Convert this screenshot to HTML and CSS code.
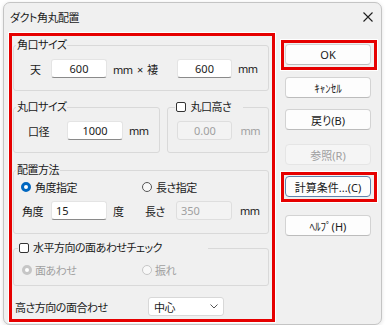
FILE: index.html
```html
<!DOCTYPE html>
<html lang="ja">

<head>
    <meta charset="UTF-8">
    <meta name="viewport" content="width=device-width, initial-scale=1.0">
    <title>ダクト角丸配置</title>
    <link rel="stylesheet" href="styles.css">
</head>

<body>
    <div class="window">
        <div class="titlebar">
            <span class="title">ダクト角丸配置</span>
            <span class="close">
                <svg width="10" height="10" viewBox="0 0 10 10">
                    <path d="M0.5 0.5L9.5 9.5M9.5 0.5L0.5 9.5" stroke="#1f1f1f" stroke-width="1.1" fill="none" />
                </svg>
            </span>
        </div>

        <div class="main">
            <!-- 左側 入力パネル -->
            <div class="panel">
                <fieldset class="group g-kaku">
                    <legend>角口サイズ</legend>
                    <div class="row p16">
                        <span class="lbl w21">天</span>
                        <input class="box w56" value="600">
                        <span class="unit w70 ws">mm × 褄</span>
                        <input class="box w55" value="600">
                        <span class="unit">mm</span>
                    </div>
                </fieldset>

                <div class="pair">
                    <fieldset class="group g-maru">
                        <legend>丸口サイズ</legend>
                        <div class="row p14">
                            <span class="lbl w39">口径</span>
                            <input class="box w56" value="1000">
                            <span class="unit">mm</span>
                        </div>
                    </fieldset>
                    <fieldset class="group g-height">
                        <legend class="check-legend"><span class="check"></span>丸口高さ</legend>
                        <div class="row p9">
                            <input class="box w55" value="0.00" disabled>
                            <span class="unit u8 off">mm</span>
                        </div>
                    </fieldset>
                </div>

                <fieldset class="group g-place">
                    <legend>配置方法</legend>
                    <div class="radios p7">
                        <span class="opt"><span class="radio on"></span>角度指定</span>
                        <span class="opt"><span class="radio"></span>長さ指定</span>
                    </div>
                    <div class="row p8 gap6">
                        <span class="lbl w29">角度</span>
                        <input class="box w56 left" value="15">
                        <span class="unit w38">度</span>
                        <span class="lbl w31">長さ</span>
                        <input class="box w56 left" value="350" disabled>
                        <span class="unit u8">mm</span>
                    </div>
                </fieldset>

                <fieldset class="group g-flush">
                    <legend class="check-legend"><span class="check"></span>水平方向の面あわせチェック</legend>
                    <div class="radios p8 off">
                        <span class="opt g3"><span class="radio on dis"></span>面あわせ</span>
                        <span class="opt g3"><span class="radio dis"></span>振れ</span>
                    </div>
                </fieldset>

                <div class="bottom-row">
                    <span class="lbl w133">高さ方向の面合わせ</span>
                    <div class="select">
                        <span>中心</span>
                        <svg width="8" height="5" viewBox="0 0 8 5">
                            <path d="M0.5 0.5L4 4L7.5 0.5" stroke="#555" stroke-width="1" fill="none" />
                        </svg>
                    </div>
                </div>
            </div>

            <!-- 右側 ボタン -->
            <div class="side">
                <div class="mark">
                    <button class="btn">OK</button>
                </div>
                <button class="btn m7">ｷｬﾝｾﾙ</button>
                <button class="btn m11">戻り(B)</button>
                <button class="btn m14" disabled>参照(R)</button>
                <div class="mark m7">
                    <button class="btn focus">計算条件...(C)</button>
                </div>
                <button class="btn m13">ﾍﾙﾌﾟ(H)</button>
            </div>
        </div>
    </div>
</body>

</html>
```

FILE: styles.css
```css
* {
    margin: 0;
    padding: 0;
    box-sizing: border-box;
}

body {
    background: #fff;
    font-family: "Noto Sans", "Noto Sans CJK JP", sans-serif;
    font-size: 11px;
    letter-spacing: -0.5px;
    color: #1a1a1a;
    font-feature-settings: "palt";
}

.window {
    width: 379px;
    height: 323px;
    margin: 2px 0 0 3px;
    background: #f0f0f0;
    border: 1px solid #c4c4c4;
    border-radius: 7px;
    box-shadow: 0 1px 4px rgba(0, 0, 0, .12);
}

.titlebar {
    height: 30px;
    display: flex;
    align-items: center;
    justify-content: space-between;
    padding: 0 8px 3px 6px;
}

.close {
    display: flex;
}

.main {
    display: flex;
    align-items: flex-start;
    padding-left: 5px;
}

/* 赤枠 */
.panel {
    width: 266px;
    height: 289px;
    border: 3px solid #e60000;
    padding: 1px 3px 0 1px;
    box-shadow: 0 0 0 1px #fff;
}

.mark {
    border: 3px solid #e60000;
    padding: 1px 3px 2px 1px;
    box-shadow: 0 0 0 1px #fff;
}

/* グループ枠 */
.group {
    border: 1px solid #d9d9d9;
    border-radius: 3px;
    min-width: 0;
}

.group legend {
    margin-left: 2px;
    padding: 0 1px;
    height: 16px;
    line-height: 16px;
}

.check-legend {
    display: flex;
    align-items: center;
}

.g-kaku {
    padding: 6px 0 12px 0;
}

.pair {
    display: flex;
    gap: 7px;
    margin-top: 8px;
}

.g-maru {
    width: 148px;
    padding: 6px 0 12px 0;
}

.g-height {
    width: 102px;
    padding: 6px 0 12px 0;
}

.g-height legend {
    margin-left: 7px;
    padding-right: 12px;
}

.g-place {
    margin-top: 9px;
    padding: 1px 0 13px 0;
}

.g-flush {
    margin-top: 6px;
    padding: 6px 0 7px 0;
}

.g-flush legend {
    margin-left: 4px;
    padding-right: 46px;
}

.row {
    display: flex;
    align-items: center;
    height: 19px;
}

.p7 { padding-left: 7px; }
.p8 { padding-left: 8px; }
.p9 { padding-left: 9px; }
.p14 { padding-left: 14px; }
.p16 { padding-left: 16px; }

.gap6 {
    margin-top: 6px;
}

.lbl {
    flex: none;
}

.w21 { width: 21px; }
.w29 { width: 29px; }
.w31 { width: 31px; }
.w39 { width: 39px; }
.w133 { width: 133px; }

.unit {
    flex: none;
    padding-left: 6px;
}

.w70 { width: 70px; }
.w38 { width: 38px; }

.ws {
    word-spacing: 2px;
}

.u8 {
    padding-left: 8px;
}

.off {
    color: #a0a0a0;
}

/* テキストボックス */
.box {
    flex: none;
    height: 19px;
    font: inherit;
    letter-spacing: 0;
    color: #1a1a1a;
    text-align: center;
    background: #fff;
    border: 1px solid #e4e4e4;
    border-bottom-color: #8a8a8a;
    border-radius: 3px;
    outline: none;
}

.box.left {
    text-align: left;
    padding-left: 4px;
}

.box:disabled {
    background: #f3f3f3;
    border-color: #dedede;
    color: #a0a0a0;
}

.w56 { width: 56px; }
.w55 { width: 55px; }

/* チェック・ラジオ */
.check {
    width: 10px;
    height: 10px;
    border: 1px solid #333;
    border-radius: 2px;
    background: #fff;
    margin-right: 4px;
}

.radios {
    display: flex;
    align-items: center;
    height: 16px;
}

.opt {
    width: 121px;
    display: flex;
    align-items: center;
    gap: 4px;
}

.opt.g3 {
    width: 120px;
    gap: 3px;
}

.radio {
    flex: none;
    width: 10px;
    height: 10px;
    border-radius: 50%;
    border: 1px solid #555;
    background: #f8f8f8;
}

.radio.on {
    border: 3px solid #0067c0;
    background: #fff;
}

.radio.dis {
    border-color: #c6c6c6;
}

/* 高さ方向 */
.bottom-row {
    display: flex;
    align-items: center;
    height: 19px;
    margin: 11px 0 0 2px;
}

.select {
    width: 76px;
    height: 19px;
    display: flex;
    align-items: center;
    justify-content: space-between;
    padding: 0 5px;
    background: #fff;
    border: 1px solid #d8d8d8;
    border-radius: 3px;
}

/* ボタン */
.side {
    margin-left: 6px;
    padding-top: 7px;
    display: flex;
    flex-direction: column;
    align-items: flex-start;
}

.btn {
    width: 86px;
    height: 21px;
    font: inherit;
    color: #1a1a1a;
    background: #fdfdfd;
    border: 1px solid #d3d3d3;
    border-bottom-color: #bcbcbc;
    border-radius: 4px;
}

.side > .btn {
    margin-left: 4px;
}

.btn:disabled {
    background: #f5f5f5;
    border-color: #e5e5e5;
    color: #a0a0a0;
}

.btn.focus {
    border-color: #5f84ad;
}

.m7 { margin-top: 7px; }
.m11 { margin-top: 11px; }
.m13 { margin-top: 13px; }
.m14 { margin-top: 14px; }
```
